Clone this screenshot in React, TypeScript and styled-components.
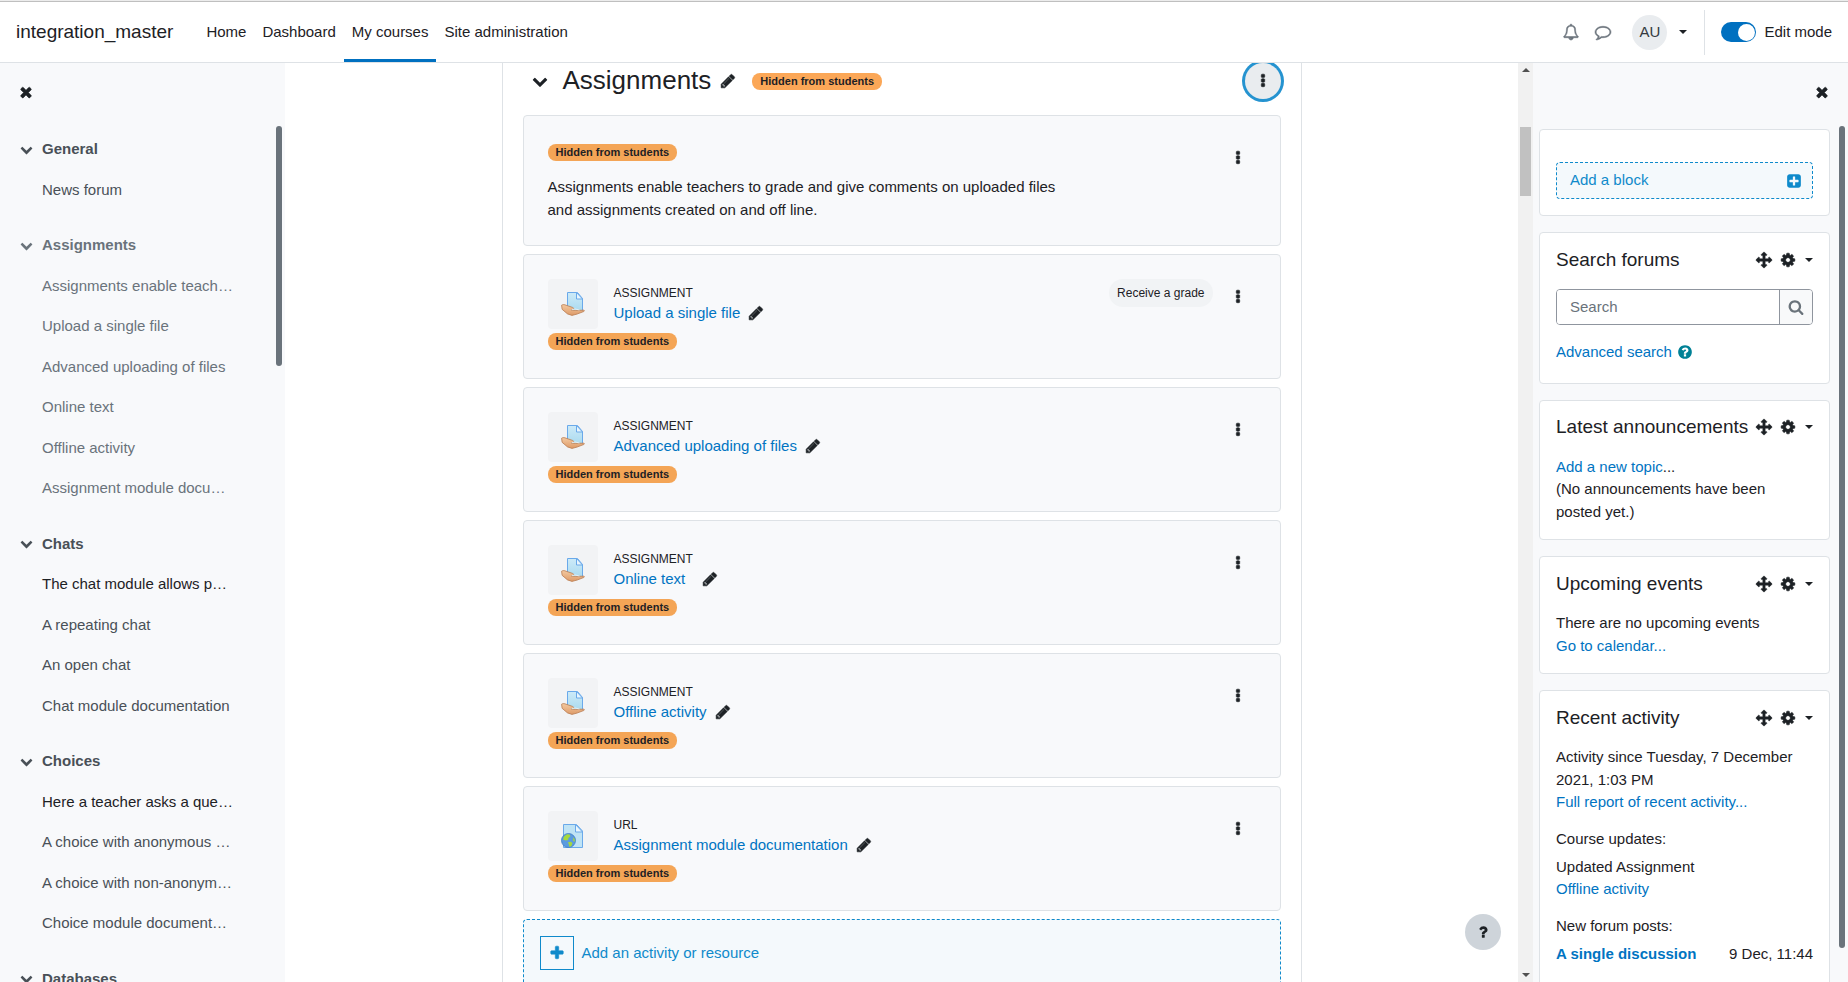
import React from "react";
import styled, { createGlobalStyle, css } from "styled-components";

const GlobalStyle = createGlobalStyle`
  *, *::before, *::after { box-sizing: border-box; }
  body {
    margin: 0;
    background: #fff;
    color: #1d2125;
    font: 15px/1.5 "Liberation Sans", Arial, sans-serif;
  }
  a { color: #0074c2; text-decoration: none; }
  button { font: inherit; color: inherit; border: 0; background: none; padding: 0; cursor: pointer; }
  h1, h2, h3, ul, p { margin: 0; padding: 0; font-weight: 400; }
`;

/* ---------- icons ---------- */

const ICONS = {
  bell: "M912 1696q0-16-16-16-59 0-101.5-42.5t-42.5-101.5q0-16-16-16t-16 16q0 73 51.5 124.5t124.5 51.5q16 0 16-16zm-666-288h1300q-266-300-266-832 0-51-24-105t-69-103-121.5-80.5-169.5-31.5-169.5 31.5-121.5 80.5-69 103-24 105q0 532-266 832zm1482 0q0 52-38 90t-90 38h-448q0 106-75 181t-181 75-181-75-75-181h-448q-52 0-90-38t-38-90q50-42 91-88t85-119.5 74.5-158.5 50-206 19.5-260q0-152 117-282.5t307-158.5q-8-19-8-39 0-40 28-68t68-28 68 28 28 68q0 20-8 39 190 28 307 158.5t117 282.5q0 139 19.5 260t50 206 74.5 158.5 85 119.5 91 88z",
  comment: "M896 384q-204 0-381.5 69.5t-282 187.5-104.5 255q0 112 71.5 213.5t201.5 175.5l87 50-27 96q-24 91-70 172 152-63 275-171l43-38 57 6q69 8 130 8 204 0 381.5-69.5t282-187.5 104.5-255-104.5-255-282-187.5-381.5-69.5zm896 512q0 174-120 321.5t-326 233-450 85.5q-70 0-145-8-198 175-460 242-49 14-114 22h-5q-15 0-27-10.5t-16-27.5v-1q-3-4-.5-12t2-10 4.5-9.5l6-9 7-8.5 8-9q7-8 31-34.5t34.5-38 31-39.5 32.5-51 27-59 26-76q-157-89-247.5-220t-90.5-281q0-174 120-321.5t326-233 450-85.5 450 85.5 326 233 120 321.5z",
  pencil: "M491 1536l91-91-235-235-91 91v107h128v128h107zm523-928q0-22-22-22-10 0-17 7l-542 542q-7 7-7 17 0 22 22 22 10 0 17-7l542-542q7-7 7-17zm-54-192l416 416-832 832h-416v-416zm683 96q0 53-37 90l-166 166-416-416 166-165q36-38 90-38 53 0 91 38l235 234q37 39 37 91z",
  times: "M1490 1322q0 40-28 68l-136 136q-28 28-68 28t-68-28l-294-294-294 294q-28 28-68 28t-68-28l-136-136q-28-28-28-68t28-68l294-294-294-294q-28-28-28-68t28-68l136-136q28-28 68-28t68 28l294 294 294-294q28-28 68-28t68 28l136 136q28 28 28 68t-28 68l-294 294 294 294q28 28 28 68z",
  chevron: "M1683 808l-742 741q-19 19-45 19t-45-19l-742-741q-19-19-19-45.5t19-45.5l166-165q19-19 45-19t45 19l531 531 531-531q19-19 45-19t45 19l166 165q19 19 19 45.5t-19 45.5z",
  ellipsis: "M1088 1248v192q0 40-28 68t-68 28h-192q-40 0-68-28t-28-68v-192q0-40 28-68t68-28h192q40 0 68 28t28 68zm0-512v192q0 40-28 68t-68 28h-192q-40 0-68-28t-28-68v-192q0-40 28-68t68-28h192q40 0 68 28t28 68zm0-512v192q0 40-28 68t-68 28h-192q-40 0-68-28t-28-68v-192q0-40 28-68t68-28h192q40 0 68 28t28 68z",
  arrows: "M1792 896q0 26-19 45l-256 256q-19 19-45 19t-45-19-19-45v-128h-384v384h128q26 0 45 19t19 45-19 45l-256 256q-19 19-45 19t-45-19l-256-256q-19-19-19-45t19-45 45-19h128v-384h-384v128q0 26-19 45t-45 19-45-19l-256-256q-19-19-19-45t19-45l256-256q19-19 45-19t45 19 19 45v128h384v-384h-128q-26 0-45-19t-19-45 19-45l256-256q19-19 45-19t45 19l256 256q19 19 19 45t-19 45-45 19h-128v384h384v-128q0-26 19-45t45-19 45 19l256 256q19 19 19 45z",
  cog: "M1152 896q0-106-75-181t-181-75-181 75-75 181 75 181 181 75 181-75 75-181zm512-109v222q0 12-8 23t-20 13l-185 28q-19 54-39 91 35 50 107 138 10 12 10 25t-9 23q-27 37-99 108t-94 71q-12 0-26-9l-138-108q-44 23-91 38-16 136-29 186-7 28-36 28h-222q-14 0-24.5-8.5t-11.5-21.5l-28-184q-49-16-90-37l-141 107q-10 9-25 9-14 0-25-11-126-114-165-168-7-10-7-23 0-12 8-23 15-21 51-66.5t54-70.5q-27-50-41-99l-183-27q-13-2-21-12.5t-8-23.5v-222q0-12 8-23t19-13l186-28q14-46 39-92-40-57-107-138-10-12-10-24 0-10 9-23 26-36 98.5-107.5t94.5-71.5q13 0 26 10l138 107q44-23 91-38 16-136 29-186 7-28 36-28h222q14 0 24.5 8.5t11.5 21.5l28 184q49 16 90 37l142-107q9-9 24-9 13 0 25 10 129 119 165 170 7 8 7 22 0 12-8 23-15 21-51 66.5t-54 70.5q26 50 41 98l183 28q13 2 21 12.5t8 23.5z",
  search: "M1216 832q0-185-131.5-316.5t-316.5-131.5-316.5 131.5-131.5 316.5 131.5 316.5 316.5 131.5 316.5-131.5 131.5-316.5zm512 832q0 52-38 90t-90 38q-54 0-90-38l-343-342q-179 124-399 124-143 0-273.5-55.5t-225-150-150-225-55.5-273.5 55.5-273.5 150-225 225-150 273.5-55.5 273.5 55.5 225 150 150 225 55.5 273.5q0 220-124 399l343 343q37 37 37 90z",
  plus: "M1600 736v192q0 40-28 68t-68 28h-416v416q0 40-28 68t-68 28h-192q-40 0-68-28t-28-68v-416h-416q-40 0-68-28t-28-68v-192q0-40 28-68t68-28h416v-416q0-40 28-68t68-28h192q40 0 68 28t28 68v416h416q40 0 68 28t28 68z",
  plusSquare: "M1408 960v-128q0-26-19-45t-45-19h-320v-320q0-26-19-45t-45-19h-128q-26 0-45 19t-19 45v320h-320q-26 0-45 19t-19 45v128q0 26 19 45t45 19h320v320q0 26 19 45t45 19h128q26 0 45-19t19-45v-320h320q26 0 45-19t19-45zm256-544v960q0 119-84.5 203.5t-203.5 84.5h-960q-119 0-203.5-84.5t-84.5-203.5v-960q0-119 84.5-203.5t203.5-84.5h960q119 0 203.5 84.5t84.5 203.5z",
  questionCircle: "M1024 1376v-192q0-14-9-23t-23-9h-192q-14 0-23 9t-9 23v192q0 14 9 23t23 9h192q14 0 23-9t9-23zm256-672q0-88-55.5-163t-138.5-116-170-41q-243 0-371 213-15 24 8 42l132 100q7 6 19 6 16 0 25-12 53-68 86-92 34-24 86-24 48 0 85.5 26t37.5 59q0 38-20 61t-68 45q-63 28-115.5 86.5t-52.5 125.5v36q0 14 9 23t23 9h192q14 0 23-9t9-23q0-19 21.5-49.5t54.5-49.5q32-18 49-28.5t46-35 44.5-48 28-60.5 12.5-81zm384 192q0 209-103 385.5t-279.5 279.5-385.5 103-385.5-103-279.5-279.5-103-385.5 103-385.5 279.5-279.5 385.5-103 385.5 103 279.5 279.5 103 385.5z",
  question: "M1088 1256v240q0 16-12 28t-28 12h-240q-16 0-28-12t-12-28v-240q0-16 12-28t28-12h240q16 0 28 12t12 28zm316-600q0 54-15.5 101t-35 76.5-55 59.5-57.5 43.5-61 35.5q-41 23-68.5 65t-27.5 67q0 17-12 32.5t-28 15.5h-240q-15 0-25.5-18.5t-10.5-37.5v-45q0-83 65-156.5t143-108.5q59-27 84-56t25-76q0-42-46.5-74t-107.5-32q-65 0-108 29-35 25-107 115-13 16-31 16-12 0-25-8l-164-125q-13-10-15.5-25t5.5-28q160-266 464-266 80 0 161 31t146 83 106 127.5 41 158.5z",
};

const Glyph = styled.svg<{ $bold?: boolean }>`
  display: block;
  flex: none;
  overflow: visible;
  fill: currentColor;
  stroke: currentColor;
  stroke-width: ${(p) => (p.$bold ? 60 : 0)};
`;

function Icon({
  name,
  size = 16,
  bold,
}: {
  name: keyof typeof ICONS;
  size?: number;
  bold?: boolean;
}) {
  return (
    <Glyph $bold={bold} width={size} height={size} viewBox="0 0 1792 1792" aria-hidden="true">
      <path d={ICONS[name]} />
    </Glyph>
  );
}

const Caret = styled.span`
  display: block;
  border: 4px solid transparent;
  border-top-color: currentColor;
  border-bottom-width: 0;
`;

function AssignmentIcon() {
  return (
    <svg width="24" height="24" viewBox="0 0 24 24" aria-hidden="true">
      <defs>
        <linearGradient id="sheet" x1="0" y1="0" x2="0" y2="1">
          <stop offset="0" stopColor="#cdeaf8" />
          <stop offset="1" stopColor="#a9daef" />
        </linearGradient>
        <linearGradient id="palm" x1="0" y1="0" x2="0" y2="1">
          <stop offset="0" stopColor="#f4c9a0" />
          <stop offset="1" stopColor="#dd9a68" />
        </linearGradient>
      </defs>
      <path d="M6.5.5h10l5 6v13h-15z" fill="url(#sheet)" stroke="#6aa9ea" />
      <path d="M15.500 .5v6.500h6z" fill="#eaf6fd" stroke="#6aa9ea" strokeLinejoin="round" />
      <path d="M.6 13.200c1.400-1 3-.6 4.400 0l6.500 2.200c1.400.5 1.600 1.300.6 1.900l-2.100.7 4.500.3 8.300-.1c1 .3.600 1-.3 1.400l-6.500 2.500-5 1.300-4.500-1.500-5.400-4.600z" fill="url(#palm)" stroke="#b97b50" strokeWidth=".8" strokeLinejoin="round" />
      <path d="M10.500 17.800l3.500-.8 4.500 1" fill="none" stroke="#e8f4fb" strokeWidth=".9" />
    </svg>
  );
}

function UrlIcon() {
  return (
    <svg width="24" height="24" viewBox="0 0 24 24" aria-hidden="true">
      <path d="M2.500.5h13l6 6.500v16.500h-19z" fill="#bfe3f5" stroke="#6aa9ea" />
      <path d="M14.500.5v7.500h7z" fill="#eaf6fd" stroke="#6aa9ea" strokeLinejoin="round" />
      <circle cx="7.500" cy="16.500" r="7" fill="#5b9bdf" stroke="#3f7cc4" strokeWidth=".8" />
      <path d="M2 15.500l1-3 3-2.300 2.600.3 .9 1.800-2 1.600-.4 2-2.300.6zM7 18.300l3-.5 1.400 1.500-1 2.700-1.800.9-.8-2.400zM12.300 13.200l1.400 1.800v3l-1.600-1.300z" fill="#a6d93c" />
    </svg>
  );
}

/* ---------- page frame ---------- */

const Page = styled.div`
  display: flex;
  flex-direction: column;
  height: 100vh;
  overflow: hidden;
  border-top: 1px solid #ececec;
`;

const Columns = styled.div`
  display: flex;
  flex: 1;
  min-height: 0;
`;

/* ---------- top bar ---------- */

const Navbar = styled.header`
  display: flex;
  align-items: stretch;
  flex: none;
  height: 62px;
  padding: 0 16px;
  border-top: 1px solid #bfbfbf;
  border-bottom: 1px solid #dee2e6;
  background: #fff;
`;

const Brand = styled.a`
  display: flex;
  align-items: center;
  margin-right: 25px;
  font-size: 19px;
  color: #1d2125;
`;

const NavLink = styled.a<{ $active?: boolean }>`
  display: flex;
  align-items: center;
  padding: 3px 8px 0;
  border-bottom: 3px solid ${(p) => (p.$active ? "#0070c0" : "transparent")};
  color: #1d2125;
`;

const NavList = styled.nav`
  display: flex;
`;

const NavTools = styled.div`
  display: flex;
  align-items: center;
  margin-left: auto;
`;

const ToolButton = styled.button`
  display: flex;
  align-items: center;
  justify-content: center;
  width: 32px;
  height: 32px;
  color: #6a737b;
`;

const UserButton = styled.button`
  display: flex;
  align-items: center;
  gap: 12px;
  margin: 0 17px 0 13px;
`;

const Avatar = styled.span`
  display: flex;
  align-items: center;
  justify-content: center;
  width: 35px;
  height: 35px;
  border-radius: 50%;
  background: #e9ecef;
  color: #343a40;
`;

const EditMode = styled.label`
  display: flex;
  align-items: center;
  gap: 8px;
  height: 45px;
  padding-left: 16px;
  border-left: 1px solid #dee2e6;
`;

const Switch = styled.input`
  appearance: none;
  display: flex;
  align-items: center;
  justify-content: flex-end;
  width: 35px;
  height: 20px;
  margin: 0;
  padding: 1px;
  border-radius: 10px;
  background: #0070c0;
  &::before {
    content: "";
    width: 17px;
    height: 17px;
    border-radius: 50%;
    background: #fff;
  }
`;

/* ---------- drawers ---------- */

const Drawer = styled.aside<{ $side: "left" | "right" }>`
  display: flex;
  flex-direction: column;
  flex: none;
  width: ${(p) => (p.$side === "left" ? 285 : 315)}px;
  background: #f8f9fb;
`;

const DrawerHeader = styled.div<{ $end?: boolean }>`
  display: flex;
  flex: none;
  align-items: center;
  justify-content: ${(p) => (p.$end ? "flex-end" : "flex-start")};
  height: 58px;
  padding: 0 18px;
`;

const DrawerBody = styled.div`
  display: flex;
  flex: 1;
  min-height: 0;
  padding: 5px 3px 0 0;
  overflow: hidden;
`;

const DrawerThumb = styled.div<{ $share: string }>`
  flex: none;
  width: 6px;
  height: ${(p) => p.$share};
  border-radius: 3px;
  background: #6a737b;
`;

const CourseIndex = styled.nav`
  flex: 1;
  min-width: 0;
  padding: 3px 0 0 20px;
`;

const IndexSection = styled.section`
  margin-bottom: 15px;
`;

const IndexTitle = styled.h2<{ $dim?: boolean }>`
  display: flex;
  align-items: center;
  gap: 9px;
  padding: 9px 0;
  font-size: 15px;
  font-weight: 700;
  color: ${(p) => (p.$dim ? "#6a737b" : "#495057")};
`;

const IndexLink = styled.a<{ $tone: Tone }>`
  display: block;
  padding: 9px 0 9px 22px;
  white-space: nowrap;
  color: ${(p) => ({ dim: "#6a737b", normal: "#495057", strong: "#1d2125" })[p.$tone]};
`;

/* ---------- main column ---------- */

const Main = styled.main`
  position: relative;
  display: flex;
  flex: 1;
  min-width: 0;
`;

const Scroller = styled.div`
  flex: 1;
  min-width: 0;
  overflow: hidden;
`;

const Course = styled.section`
  display: flex;
  flex-direction: column;
  gap: 8px;
  max-width: 800px;
  margin: 0 auto;
  padding: 0 20px;
  border: 1px solid #dee2e6;
  border-width: 0 1px;
`;

const SectionHeader = styled.div`
  display: flex;
  align-items: center;
  height: 36px;
  margin-bottom: 8px;
  padding-left: 9px;
`;

const SectionTitle = styled.h1`
  margin: 0 9px 0 15px;
  padding-bottom: 2px;
  font-size: 26px;
  line-height: 32px;
`;

const Badge = styled.span`
  display: block;
  width: fit-content;
  padding: 0 8px;
  border-radius: 8px;
  background: #fba757;
  font-size: 11px;
  font-weight: 700;
  line-height: 17px;
  white-space: nowrap;
`;

const HeaderBadge = styled(Badge)`
  margin-left: 16px;
`;

const MenuButton = styled.button<{ $focused?: boolean }>`
  display: flex;
  flex: none;
  align-items: center;
  justify-content: center;
  width: 36px;
  height: 36px;
  border-radius: 50%;
  ${(p) =>
    p.$focused &&
    css`
      margin-left: auto;
      background: #e9ecef;
      box-shadow: 0 0 0 3px #2593d0;
    `}
`;

const Card = styled.article`
  display: flex;
  justify-content: space-between;
  padding: 24px;
  border: 1px solid #dee2e6;
  border-radius: 4px;
  background: #f8f9fb;
`;

const CardBody = styled.div`
  display: flex;
  flex-direction: column;
  gap: 4px;
  margin-bottom: 4px;
  & > ${Badge} {
    background: #f4a556;
  }
`;

const LabelBody = styled.div`
  max-width: 520px;
  padding-top: 4px;
  & > p {
    margin-top: 15px;
  }
  & > ${Badge} {
    background: #f4a556;
  }
`;

const ActivityHead = styled.div`
  display: flex;
  align-items: center;
  gap: 16px;
`;

const IconTile = styled.div`
  display: flex;
  align-items: center;
  justify-content: center;
  width: 50px;
  height: 50px;
  border-radius: 4px;
  background: #f2f3f5;
`;

const ActivityType = styled.div`
  font-size: 12px;
  line-height: 18px;
  text-transform: uppercase;
`;

const ActivityName = styled.div`
  display: flex;
  align-items: center;
  gap: 8px;
  white-space: pre;
`;

const CardActions = styled.div`
  display: flex;
  align-items: flex-start;
  gap: 7px;
`;

const GradeChip = styled.span`
  padding: 5px 8px;
  border-radius: 14px;
  background: #f1f3f5;
  font-size: 12px;
  line-height: 18px;
`;

const AddActivity = styled.button`
  display: flex;
  align-items: center;
  gap: 8px;
  padding: 16px;
  border: 1px dashed #0f8acb;
  border-radius: 4px;
  background: #f4f9fc;
  color: #0f8acb;
`;

const PlusBox = styled.span`
  display: flex;
  align-items: center;
  justify-content: center;
  width: 34px;
  height: 34px;
  border: 1px solid currentColor;
`;

const HelpButton = styled.button`
  position: absolute;
  right: 32px;
  bottom: 32px;
  display: flex;
  align-items: center;
  justify-content: center;
  width: 36px;
  height: 36px;
  border-radius: 50%;
  background: #ced4da;
`;

const ScrollTrack = styled.div`
  display: flex;
  flex: none;
  flex-direction: column;
  align-items: center;
  width: 15px;
  padding: 5px 0;
  background: #f1f1f1;
`;

const ScrollArrow = styled.span<{ $down?: boolean }>`
  border: 4px solid transparent;
  ${(p) =>
    p.$down
      ? css`
          margin-top: auto;
          border-top-color: #505050;
          border-bottom-width: 0;
        `
      : css`
          border-bottom-color: #505050;
          border-top-width: 0;
        `}
`;

const ScrollThumb = styled.span`
  width: 11px;
  height: 69px;
  margin-top: 55px;
  background: #c1c1c1;
`;

/* ---------- blocks ---------- */

const Blocks = styled.div`
  display: flex;
  flex: 1;
  flex-direction: column;
  gap: 16px;
  min-width: 0;
  padding: 3px 9px 0 6px;
`;

const Block = styled.section`
  flex: none;
  padding: 16px;
  border: 1px solid #dee2e6;
  border-radius: 4px;
  background: #fff;
`;

const BlockHeader = styled.div`
  display: flex;
  align-items: center;
  gap: 8px;
  height: 21px;
  margin-bottom: 18px;
  white-space: nowrap;
`;

const BlockTitle = styled.h2`
  flex: 1;
  min-width: 0;
  font-size: 19px;
  line-height: 22px;
`;

const BlockMenu = styled.button`
  display: flex;
  align-items: center;
  gap: 9px;
`;

const AddBlock = styled.button`
  display: flex;
  align-items: center;
  justify-content: space-between;
  width: 100%;
  height: 37px;
  margin-top: 16px;
  padding: 0 10px 0 13px;
  border: 1px dashed #0f8acb;
  border-radius: 4px;
  background: #f4f9fc;
  color: #0f8acb;
`;

const SearchForm = styled.form`
  display: flex;
  height: 36px;
  margin: 19px 0 16px;
  border: 1px solid #8f959e;
  border-radius: 4px;
  overflow: hidden;
`;

const SearchInput = styled.input`
  flex: 1;
  min-width: 0;
  padding: 1px 13px 0;
  border: 0;
  font: inherit;
  &::placeholder {
    color: #6a737b;
    opacity: 1;
  }
`;

const SearchButton = styled.button`
  display: flex;
  align-items: center;
  justify-content: center;
  width: 33px;
  border-left: 1px solid #8f959e;
  background: #f8f9fa;
  color: #6a737b;
`;

const HelpRow = styled.div`
  display: flex;
  align-items: center;
  gap: 5px;
  padding-bottom: 3px;
`;

const HelpIcon = styled.button`
  color: #008196;
`;

const FeedTitle = styled.h3`
  margin: 16px 0 8px;
  font-size: 15px;
  line-height: 18px;
`;

const FeedRow = styled.div`
  display: flex;
  justify-content: space-between;
  padding-bottom: 16px;
  & > a {
    font-weight: 700;
  }
`;

/* ---------- data ---------- */

type Tone = "dim" | "normal" | "strong";

const SECTIONS: { title: string; dim?: boolean; items: [string, Tone][] }[] = [
  { title: "General", items: [["News forum", "normal"]] },
  {
    title: "Assignments",
    dim: true,
    items: [
      ["Assignments enable teach…", "dim"],
      ["Upload a single file", "dim"],
      ["Advanced uploading of files", "dim"],
      ["Online text", "dim"],
      ["Offline activity", "dim"],
      ["Assignment module docu…", "dim"],
    ],
  },
  {
    title: "Chats",
    items: [
      ["The chat module allows p…", "strong"],
      ["A repeating chat", "normal"],
      ["An open chat", "normal"],
      ["Chat module documentation", "normal"],
    ],
  },
  {
    title: "Choices",
    items: [
      ["Here a teacher asks a que…", "strong"],
      ["A choice with anonymous …", "normal"],
      ["A choice with non-anonym…", "normal"],
      ["Choice module document…", "normal"],
    ],
  },
  { title: "Databases", items: [] },
];

const ACTIVITIES: { type: string; name: string; graded?: boolean }[] = [
  { type: "Assignment", name: "Upload a single file", graded: true },
  { type: "Assignment", name: "Advanced uploading of files" },
  { type: "Assignment", name: "Online text  " },
  { type: "Assignment", name: "Offline activity" },
  { type: "URL", name: "Assignment module documentation" },
];

function BlockHead({ title }: { title: string }) {
  return (
    <BlockHeader>
      <BlockTitle>{title}</BlockTitle>
      <button aria-label={`Move ${title}`}>
        <Icon name="arrows" bold />
      </button>
      <BlockMenu aria-label={`${title} actions`}>
        <Icon name="cog" bold />
        <Caret />
      </BlockMenu>
    </BlockHeader>
  );
}

export default function App() {
  return (
    <Page>
      <GlobalStyle />
      <Navbar>
        <Brand href="#">integration_master</Brand>
        <NavList>
          <NavLink href="#">Home</NavLink>
          <NavLink href="#">Dashboard</NavLink>
          <NavLink href="#" $active>
            My courses
          </NavLink>
          <NavLink href="#">Site administration</NavLink>
        </NavList>
        <NavTools>
          <ToolButton aria-label="Notifications">
            <Icon name="bell" bold />
          </ToolButton>
          <ToolButton aria-label="Messages">
            <Icon name="comment" bold />
          </ToolButton>
          <UserButton aria-label="User menu">
            <Avatar>AU</Avatar>
            <Caret />
          </UserButton>
          <EditMode>
            <Switch type="checkbox" role="switch" defaultChecked />
            Edit mode
          </EditMode>
        </NavTools>
      </Navbar>

      <Columns>
        <Drawer $side="left">
          <DrawerHeader>
            <button aria-label="Close course index">
              <Icon name="times" bold />
            </button>
          </DrawerHeader>
          <DrawerBody>
            <CourseIndex>
              {SECTIONS.map((s) => (
                <IndexSection key={s.title}>
                  <IndexTitle $dim={s.dim}>
                    <Icon name="chevron" size={13} />
                    {s.title}
                  </IndexTitle>
                  {s.items.map(([label, tone]) => (
                    <IndexLink key={label} href="#" $tone={tone}>
                      {label}
                    </IndexLink>
                  ))}
                </IndexSection>
              ))}
            </CourseIndex>
            <DrawerThumb $share="28%" />
          </DrawerBody>
        </Drawer>

        <Main>
          <Scroller>
            <Course>
              <SectionHeader>
                <Icon name="chevron" />
                <SectionTitle>Assignments</SectionTitle>
                <button aria-label="Edit section name">
                  <Icon name="pencil" bold />
                </button>
                <HeaderBadge>Hidden from students</HeaderBadge>
                <MenuButton $focused aria-label="Section actions">
                  <Icon name="ellipsis" bold />
                </MenuButton>
              </SectionHeader>

              <Card>
                <LabelBody>
                  <Badge>Hidden from students</Badge>
                  <p>
                    Assignments enable teachers to grade and give comments on uploaded files and
                    assignments created on and off line.
                  </p>
                </LabelBody>
                <MenuButton aria-label="Label actions">
                  <Icon name="ellipsis" bold />
                </MenuButton>
              </Card>

              {ACTIVITIES.map((a) => (
                <Card key={a.name}>
                  <CardBody>
                    <ActivityHead>
                      <IconTile>{a.type === "URL" ? <UrlIcon /> : <AssignmentIcon />}</IconTile>
                      <div>
                        <ActivityType>{a.type}</ActivityType>
                        <ActivityName>
                          <a href="#">{a.name}</a>
                          <button aria-label="Edit title">
                            <Icon name="pencil" bold />
                          </button>
                        </ActivityName>
                      </div>
                    </ActivityHead>
                    <Badge>Hidden from students</Badge>
                  </CardBody>
                  <CardActions>
                    {a.graded && <GradeChip>Receive a grade</GradeChip>}
                    <MenuButton aria-label={`${a.name} actions`}>
                      <Icon name="ellipsis" bold />
                    </MenuButton>
                  </CardActions>
                </Card>
              ))}

              <AddActivity>
                <PlusBox>
                  <Icon name="plus" bold />
                </PlusBox>
                Add an activity or resource
              </AddActivity>
            </Course>
          </Scroller>
          <ScrollTrack aria-hidden="true">
            <ScrollArrow />
            <ScrollThumb />
            <ScrollArrow $down />
          </ScrollTrack>
          <HelpButton aria-label="Help">
            <Icon name="question" />
          </HelpButton>
        </Main>

        <Drawer $side="right">
          <DrawerHeader $end>
            <button aria-label="Close block drawer">
              <Icon name="times" bold />
            </button>
          </DrawerHeader>
          <DrawerBody>
            <Blocks>
              <Block>
                <AddBlock>
                  Add a block
                  <Icon name="plusSquare" />
                </AddBlock>
              </Block>

              <Block>
                <BlockHead title="Search forums" />
                <SearchForm>
                  <SearchInput type="text" placeholder="Search" aria-label="Search" />
                  <SearchButton type="button" aria-label="Search forums">
                    <Icon name="search" />
                  </SearchButton>
                </SearchForm>
                <HelpRow>
                  <a href="#">Advanced search</a>
                  <HelpIcon aria-label="Help with search">
                    <Icon name="questionCircle" />
                  </HelpIcon>
                </HelpRow>
              </Block>

              <Block>
                <BlockHead title="Latest announcements" />
                <div>
                  <a href="#">Add a new topic</a>...
                </div>
                <p>(No announcements have been posted yet.)</p>
              </Block>

              <Block>
                <BlockHead title="Upcoming events" />
                <p>There are no upcoming events</p>
                <div>
                  <a href="#">Go to calendar...</a>
                </div>
              </Block>

              <Block>
                <BlockHead title="Recent activity" />
                <p>Activity since Tuesday, 7 December 2021, 1:03 PM</p>
                <div>
                  <a href="#">Full report of recent activity...</a>
                </div>
                <FeedTitle>Course updates:</FeedTitle>
                <p>Updated Assignment</p>
                <div>
                  <a href="#">Offline activity</a>
                </div>
                <FeedTitle>New forum posts:</FeedTitle>
                <FeedRow>
                  <a href="#">A single discussion</a>
                  <span>9 Dec, 11:44</span>
                </FeedRow>
              </Block>
            </Blocks>
            <DrawerThumb $share="96%" />
          </DrawerBody>
        </Drawer>
      </Columns>
    </Page>
  );
}
